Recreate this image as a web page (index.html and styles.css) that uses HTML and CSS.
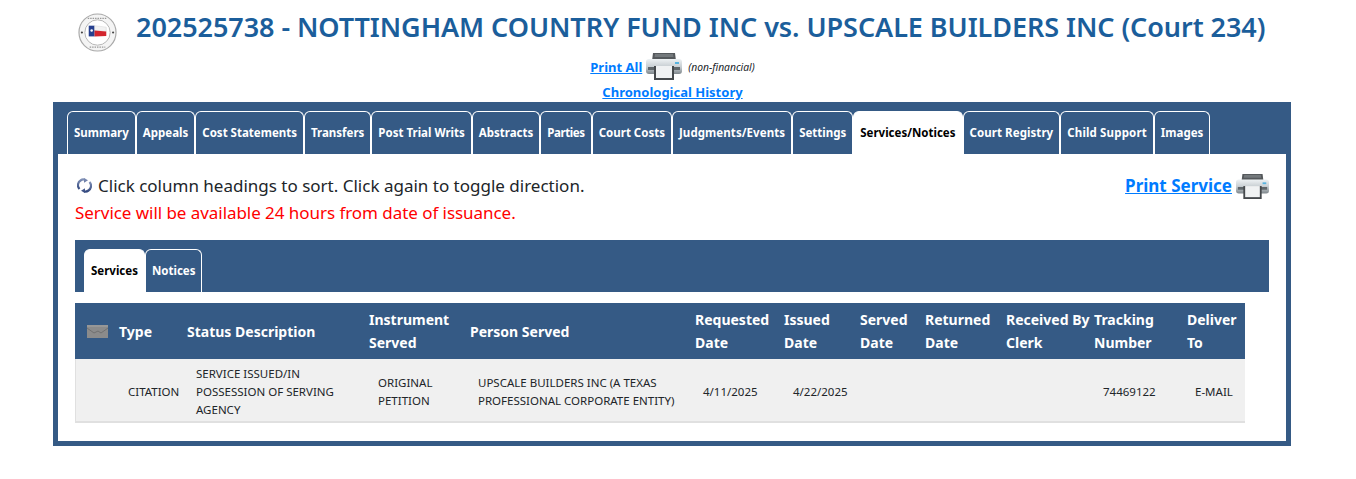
FILE: index.html
```html
<!DOCTYPE html>
<html lang="en">
<head>
<meta charset="utf-8">
<title>Case 202525738</title>
<link rel="stylesheet" href="styles.css">
</head>
<body>
<svg class="defs" width="0" height="0" aria-hidden="true">
  <defs>
    <linearGradient id="pbody" x1="0" y1="0" x2="0" y2="1"><stop offset="0" stop-color="#eef2f4"/><stop offset=".55" stop-color="#c5ccd0"/><stop offset="1" stop-color="#7f878c"/></linearGradient>
    <linearGradient id="sortg" x1="0" y1="0" x2="0" y2="1"><stop offset="0" stop-color="#7f8fb5"/><stop offset="1" stop-color="#33497f"/></linearGradient>
    <symbol id="printer" viewBox="0 0 36 27" preserveAspectRatio="none">
      <path d="M7 0h22l1 8H6z" fill="#55595c"/>
      <path d="M9 1h18l.5 3h-19z" fill="#74797c"/>
      <rect x="0" y="6" width="36" height="15" rx="3" fill="url(#pbody)"/>
      <rect x="2" y="14" width="32" height="3" fill="#5f666a"/>
      <rect x="29" y="9" width="4" height="2" fill="#58b4e0"/>
      <path d="M8 13h20v14H8z" fill="#45494c"/>
      <path d="M10 13h16v12H10z" fill="#f0f2f3"/>
    </symbol>
  </defs>
</svg>
<header class="head">
  <div class="title-row">
    <svg class="seal" viewBox="0 0 40 40" aria-hidden="true">
      <circle cx="20" cy="20" r="19" fill="#f4f4f4" stroke="#a9a9a9" stroke-width="1.2"/>
      <circle cx="20" cy="20" r="13" fill="#fff" stroke="#b5b5b5" stroke-width="1"/>
      <circle cx="4" cy="20" r="1.100" fill="#444"/>
      <circle cx="36" cy="20" r="1.100" fill="#444"/>
      <rect x="11" y="13" width="6" height="11" fill="#27408f"/>
      <path d="M17 13l12 1.500v4.500l-12-1z" fill="#f2f2f2" stroke="#bbb" stroke-width=".3"/>
      <path d="M17 18l12 1v4.500l-12 .5z" fill="#d3252e"/>
      <circle cx="14" cy="18" r="1.300" fill="#fff"/>
      <path d="M10 5.500h20M12 35h16" stroke="#999" stroke-width="1.500" stroke-dasharray="1.500 1"/>
    </svg>
    <h1 class="title">202525738 - NOTTINGHAM COUNTRY FUND INC vs. UPSCALE BUILDERS INC (Court 234)</h1>
  </div>
  <div class="print-row">
    <a class="link" href="#">Print All</a>
    <svg class="printer"><use href="#printer"/></svg>
    <em class="note">(non-financial)</em>
  </div>
  <div class="history-row"><a class="link" href="#">Chronological History</a></div>
</header>

<main class="panel">
  <nav class="tabs">
    <a class="tab" href="#">Summary</a>
    <a class="tab" href="#">Appeals</a>
    <a class="tab" href="#">Cost Statements</a>
    <a class="tab" href="#">Transfers</a>
    <a class="tab" href="#">Post Trial Writs</a>
    <a class="tab" href="#">Abstracts</a>
    <a class="tab tight" href="#">Parties</a>
    <a class="tab" href="#">Court Costs</a>
    <a class="tab loose-s" href="#">Judgments/Events</a>
    <a class="tab" href="#">Settings</a>
    <a class="tab active" href="#">Services/Notices</a>
    <a class="tab loose-s" href="#">Court Registry</a>
    <a class="tab loose" href="#">Child Support</a>
    <a class="tab" href="#">Images</a>
  </nav>
  <section class="content">
    <div class="intro">
      <div>
        <p class="hint">
          <svg class="sort" viewBox="0 0 15 15" aria-hidden="true">
            <path d="M2.500 11a5.500 5.500 0 0 1 1-8.500A5 5 0 0 1 8 1.700" fill="none" stroke="url(#sortg)" stroke-width="2.200"/>
            <path d="M12.500 4a5.500 5.500 0 0 1-1 8.500A5 5 0 0 1 7 13.300" fill="none" stroke="url(#sortg)" stroke-width="2.200"/>
            <path d="M7 0l4 2.200L7 4.800zM8 10.200l-4 2.500L8 15z" fill="url(#sortg)"/>
          </svg>
          Click column headings to sort. Click again to toggle direction.
        </p>
        <p class="warn">Service will be available 24 hours from date of issuance.</p>
      </div>
      <div class="print-service">
        <a class="link big" href="#">Print Service</a>
        <svg class="printer small"><use href="#printer"/></svg>
      </div>
    </div>
    <div class="subtabs">
      <a class="subtab active" href="#">Services</a>
      <a class="subtab" href="#">Notices</a>
    </div>
    <table class="grid">
      <colgroup>
        <col class="c1"><col class="c2"><col class="c3"><col class="c4"><col class="c5"><col class="c6">
        <col class="c7"><col class="c8"><col class="c9"><col class="c10"><col class="c11"><col class="c12">
      </colgroup>
      <thead>
        <tr>
          <th class="mail-cell"><svg class="mail" viewBox="0 0 21 13" aria-hidden="true"><rect width="21" height="13" fill="#8b8b8b"/><path d="M0 3l7 5 4-2 3 2 7-5" fill="none" stroke="#707070" stroke-width="1"/><path d="M0 1h21" stroke="#a3a3a3"/></svg></th>
          <th>Type</th>
          <th>Status Description</th>
          <th>Instrument Served</th>
          <th>Person Served</th>
          <th>Requested Date</th>
          <th>Issued Date</th>
          <th>Served Date</th>
          <th>Returned Date</th>
          <th>Received By Clerk</th>
          <th>Tracking Number</th>
          <th>Deliver To</th>
        </tr>
      </thead>
      <tbody>
        <tr>
          <td class="first"></td>
          <td>CITATION</td>
          <td>SERVICE ISSUED/IN POSSESSION OF SERVING AGENCY</td>
          <td>ORIGINAL PETITION</td>
          <td class="inset">UPSCALE BUILDERS INC (A TEXAS PROFESSIONAL CORPORATE ENTITY)</td>
          <td class="inset">4/11/2025</td>
          <td>4/22/2025</td>
          <td></td>
          <td></td>
          <td></td>
          <td>74469122</td>
          <td class="inset">E-MAIL</td>
        </tr>
      </tbody>
    </table>
  </section>
</main>
</body>
</html>
```
FILE: styles.css
```css
* { box-sizing: border-box; }
html, body { margin: 0; padding: 0; }
body {
  width: 1356px;
  height: 479px;
  overflow: hidden;
  background: #fff;
  color: #212529;
  font-family: "Noto Sans", "Open Sans", sans-serif;
}
.defs { position: absolute; }
p { margin: 0; }
.link { color: #007bff; font-weight: 700; text-decoration: underline; }

.head { height: 102px; padding-top: 13px; }
.title-row { display: flex; align-items: flex-start; height: 38px; padding-left: 78px; gap: 19px; }
.seal { width: 39px; height: 39px; flex: none; }
.title { margin: -3px 0 0; font-size: 27px; line-height: 34px; font-weight: 600; color: #1b5e9b; letter-spacing: -0.060px; white-space: nowrap; }
.print-row { display: flex; align-items: center; justify-content: center; height: 29px; margin-top: 1px; padding-right: 11px; font-size: 13px; gap: 4px; }
.printer { width: 36px; height: 27px; flex: none; }
.note { font-size: 10.300px; color: #212529; margin-left: 2px; }
.history-row { text-align: center; font-size: 13px; line-height: 18px; margin-top: 2px; padding-right: 11px; }

.panel { width: 1238px; height: 344px; margin-left: 53px; background: #355a85; padding: 9px 5px 5px; }
.tabs { display: flex; height: 43px; padding-left: 9px; }
.tab { display: flex; align-items: center; height: 43px; padding: 0 6px 2px; border: 1px solid #fff; border-bottom: 0; border-radius: 6px 6px 0 0; color: #fff; font-size: 11.500px; font-weight: 700; text-decoration: none; white-space: nowrap; }
.tab.active { background: #fff; color: #000; }
.tab.tight { letter-spacing: -0.400px; }
.tab.loose-s { letter-spacing: 0.070px; }
.tab.loose { letter-spacing: 0.150px; }

.content { height: 287px; background: #fff; padding: 18px 17px 0; }
.intro { display: flex; justify-content: space-between; height: 68px; }
.hint { font-size: 17px; line-height: 27px; color: #212529; display: flex; align-items: center; gap: 6px; padding-left: 2px; }
.sort { width: 15px; height: 15px; flex: none; }
.warn { font-size: 17px; line-height: 27px; color: #f00; letter-spacing: -0.050px; }
.print-service { display: flex; align-items: flex-start; gap: 4px; }
.big { font-size: 17px; line-height: 27px; }
.small { width: 33px; height: 25px; margin-top: 2px; }

.subtabs { display: flex; height: 52px; background: #355a85; padding: 9px 0 0 9px; }
.subtab { display: flex; align-items: center; height: 43px; padding: 0 6px 2px; border: 1px solid #fff; border-bottom: 0; border-radius: 6px 6px 0 0; color: #fff; font-size: 11.500px; font-weight: 700; text-decoration: none; }
.subtab.active { background: #fff; color: #000; }

.grid { table-layout: fixed; width: 1170px; margin-top: 11px; border-collapse: separate; border-spacing: 0; }
.c1 { width: 44px; } .c2 { width: 68px; } .c3 { width: 182px; } .c4 { width: 101px; }
.c5 { width: 225px; } .c6 { width: 89px; } .c7 { width: 76px; } .c8 { width: 65px; }
.c9 { width: 81px; } .c10 { width: 88px; } .c11 { width: 93px; } .c12 { width: 58px; }
.grid th { height: 56px; padding: 0; background: #355a85; color: #fff; font-size: 14px; line-height: 23px; font-weight: 700; text-align: left; }
.grid th.mail-cell { padding-left: 12px; }
.mail { display: block; width: 21px; height: 13px; }
.grid td { height: 64px; padding: 3px 9px 0; background: #f0f0f0; border-bottom: 2px solid #e0e0e0; color: #212529; font-size: 11.500px; line-height: 18px; vertical-align: middle; }
.grid td.inset { padding-left: 8px; }
.grid td.first { border-left: 1px solid #e0e0e0; }
```
